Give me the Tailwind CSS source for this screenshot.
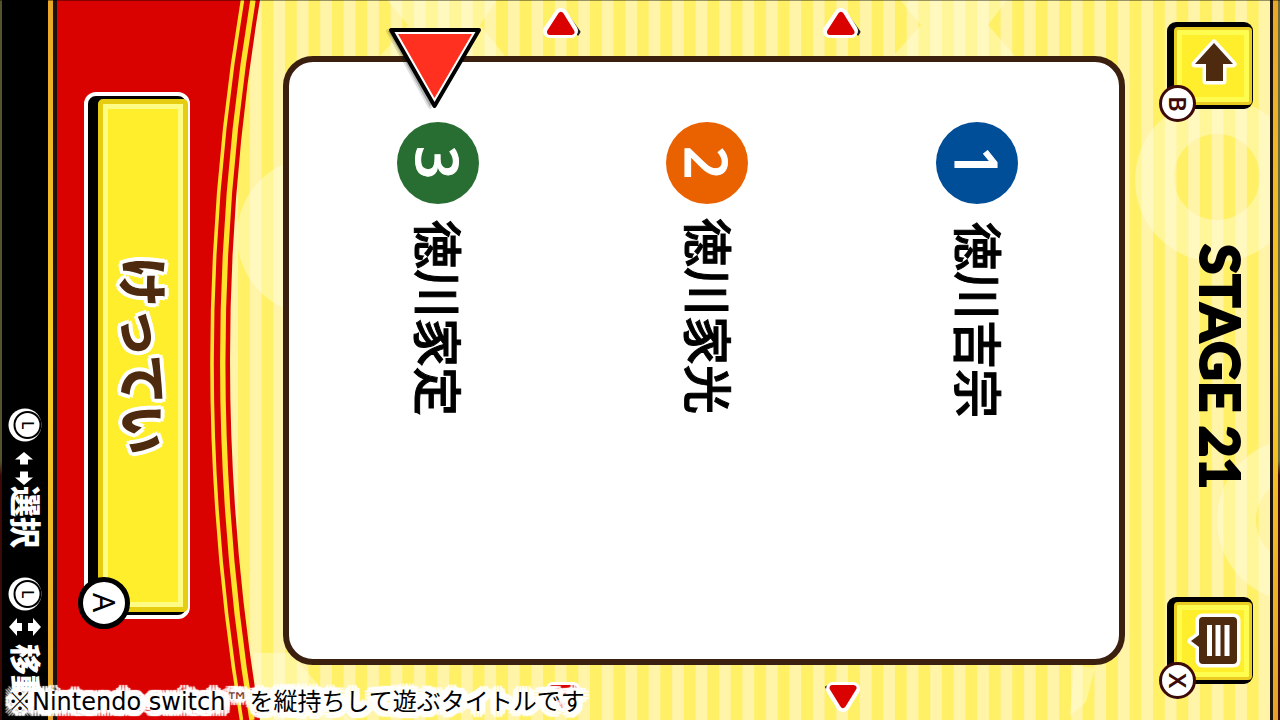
<!DOCTYPE html>
<html lang="ja">
<head>
<meta charset="utf-8">
<meta name="viewport" content="width=device-width, initial-scale=1">
<title>STAGE 21</title>
<script src="https://cdn.jsdelivr.net/npm/@tailwindcss/browser@4"></script>
</head>
<body class="relative flex h-screen min-h-[640px] overflow-hidden bg-[#fff4a6] font-['Noto_Sans','Noto_Sans_CJK_JP',sans-serif] text-black">

<!-- Striped backdrop with pale shapes -->
<svg class="absolute inset-0 size-full" viewBox="0 0 1280 720" preserveAspectRatio="none" aria-hidden="true">
  <defs>
    <pattern id="stripes" x="285" y="0" width="23.46" height="720" patternUnits="userSpaceOnUse">
      <rect width="23.46" height="720" fill="#fff4a8"/>
      <rect width="11.8" height="720" fill="#fff066"/>
    </pattern>
  </defs>
  <rect width="1280" height="720" fill="url(#stripes)"/>
  <g fill="#fffde0" fill-opacity=".42">
    <circle cx="316" cy="236" r="79"/>
    <path fill-rule="evenodd" d="M1217 98a82 82 0 1 0 .1 0zM1217 134a43 43 0 1 1-.1 0z"/>
    <path fill-rule="evenodd" d="M1299 438a82 82 0 1 0 .1 0zM1299 477a43 43 0 1 1-.1 0z"/>
    <path d="M387 0L408 25L380 56H505L480 25L497 0Z"/>
    <path d="M900 0L921 25L893 56H1015L988 25L1007 0Z"/>
    <path d="M253 653H290L350 720H258Z"/>
    <path d="M1074 665L1095 668L1086 702L1070 716Z"/>
  </g>
</svg>

<div class="relative w-[2px] shrink-0 bg-linear-to-b from-[#55532f] from-64% to-[#3c0a06] to-66%"></div>

<!-- Controller hints -->
<aside class="relative flex w-[46px] shrink-0 flex-col items-center bg-black pt-[408px] text-white">
  <div class="flex flex-col items-center">
    <span class="relative grid size-[34px] place-items-center">
      <svg class="col-start-1 row-start-1 size-[34px]" viewBox="0 0 34 34" aria-hidden="true"><circle cx="17" cy="17" r="16.5" fill="#fff"/><circle cx="19.5" cy="17" r="13" fill="#fff" stroke="#000" stroke-width="2"/></svg>
      <span class="col-start-1 row-start-1 pl-[5px] text-[16px] leading-none font-medium text-black [writing-mode:vertical-rl] [text-orientation:sideways]">L</span>
    </span>
    <svg class="mt-[9px] h-[35px] w-[20px]" viewBox="0 0 20 35" fill="#fff" role="img" aria-label="左右"><path d="M9 1L18 8.500H13V13.500H5V8.500H0ZM9 34L18 26.500H13V20.500H5V26.500H0Z"/></svg>
    <span class="text-[31px] leading-none font-black [writing-mode:vertical-rl] [text-orientation:sideways]">選択</span>
  </div>
  <div class="mt-[29px] flex flex-col items-center">
    <span class="relative grid size-[34px] place-items-center">
      <svg class="col-start-1 row-start-1 size-[34px]" viewBox="0 0 34 34" aria-hidden="true"><circle cx="17" cy="17" r="16.500" fill="#fff"/><circle cx="19.500" cy="17" r="13" fill="#fff" stroke="#000" stroke-width="2"/></svg>
      <span class="col-start-1 row-start-1 pl-[5px] text-[16px] leading-none font-medium text-black [writing-mode:vertical-rl] [text-orientation:sideways]">L</span>
    </span>
    <svg class="mt-[6px] h-[20px] w-[32px]" viewBox="0 0 32 20" fill="#fff" role="img" aria-label="上下"><path d="M0 10L8 1V6H13V14H8V19ZM32 10L24 1V6H19V14H24V19Z"/></svg>
    <span class="mt-[7px] text-[31px] leading-none font-black [writing-mode:vertical-rl] [text-orientation:sideways]">移動</span>
  </div>
</aside>
<div class="relative w-[5px] shrink-0 bg-linear-to-b from-[#e9a726] via-[#f8cb22] to-[#e6a228]"></div>
<div class="relative w-[4px] shrink-0 bg-[#1c130c]"></div>

<!-- Red decision area -->
<section class="relative w-[203px] shrink-0">
  <svg class="absolute inset-0 size-full overflow-visible" viewBox="0 0 203 720" preserveAspectRatio="none" aria-hidden="true">
    <path d="M0 0H203Q143 360 203 720H0Z" fill="#da0200"/>
    <path d="M185.500 0Q125 360 184.500 720" fill="none" stroke="#ffe22c" stroke-width="3.600"/>
    <path d="M196 0Q136 360 195 720" fill="none" stroke="#ffe22c" stroke-width="5.400"/>
  </svg>
  <div class="relative ml-[27px] flex h-full w-[106px] flex-col pt-[92px] pb-[101px]">
    <button class="relative flex flex-1 rounded-[12px] border-4 border-white bg-black pt-[3px] pr-0 pb-[3px] pl-[10px]">
      <span class="-mr-[2px] flex flex-1 items-center justify-center self-stretch rounded-[5px] border-[5px] border-[#e6cd12] bg-[#ffee2c] shadow-[inset_0_0_0_5px_#fffc86]">
        <span class="text-[50px] leading-none font-black text-[#4e2a0e] [writing-mode:vertical-rl] [text-orientation:sideways] [text-shadow:4px_0_white,-4px_0_white,0_4px_white,0_-4px_white,3px_3px_white,-3px_3px_white,3px_-3px_white,-3px_-3px_white]">けってい</span>
      </span>
      <span class="absolute -bottom-[14px] -left-[10px] grid size-[52px] place-items-center rounded-full border-[5px] border-black bg-white text-[30px] leading-none font-normal [writing-mode:vertical-rl] [text-orientation:sideways]">A</span>
    </button>
  </div>
</section>

<!-- Answer panel -->
<main class="relative ml-[23px] flex min-w-0 flex-1 flex-col">
  <div class="flex h-[56px] shrink-0 items-start justify-center gap-[244px] pt-[8px] pr-[6px]">
    <svg class="h-[31px] w-[36px] overflow-visible" viewBox="0 0 36 31" stroke-linejoin="round" aria-hidden="true"><path d="M23 6L36 24L34 27" fill="none" stroke="#222" stroke-width="3"/><path d="M18 7L28 23H7Z" fill="#fff" stroke="#fff" stroke-width="14"/><path d="M18 7L28.500 24H7Z" fill="#da0200" stroke="#da0200" stroke-width="6"/></svg>
    <svg class="h-[31px] w-[36px] overflow-visible" viewBox="0 0 36 31" stroke-linejoin="round" aria-hidden="true"><path d="M23 6L36 24L34 27" fill="none" stroke="#222" stroke-width="3"/><path d="M18 7L28 23H7Z" fill="#fff" stroke="#fff" stroke-width="14"/><path d="M18 7L28.500 24H7Z" fill="#da0200" stroke="#da0200" stroke-width="6"/></svg>
  </div>
  <div class="flex flex-1 flex-row-reverse rounded-[30px] border-[6px] border-[#3b200f] bg-white pr-[7px] pl-[14px]">
    <button class="flex flex-1 flex-col items-center pt-[60px]">
      <span class="grid size-[82px] place-items-center rounded-full bg-[#004d98] text-[58px] leading-none font-medium text-white [writing-mode:vertical-rl] [text-orientation:sideways] [-webkit-text-stroke:1px_white]">1</span>
      <span class="mt-[18px] text-[49px] leading-none font-medium [writing-mode:vertical-rl] [text-orientation:sideways] [-webkit-text-stroke:1px_black]">徳川吉宗</span>
    </button>
    <button class="flex flex-1 flex-col items-center pt-[60px]">
      <span class="grid size-[82px] place-items-center rounded-full bg-[#ea6200] text-[58px] leading-none font-medium text-white [writing-mode:vertical-rl] [text-orientation:sideways] [-webkit-text-stroke:1px_white]">2</span>
      <span class="mt-[14px] text-[49px] leading-none font-medium [writing-mode:vertical-rl] [text-orientation:sideways] [-webkit-text-stroke:1px_black]">徳川家光</span>
    </button>
    <button class="relative flex flex-1 flex-col items-center pt-[60px]" aria-current="true">
      <svg class="absolute -top-[37px] left-[82px] h-[86px] w-[98px]" viewBox="0 0 98 86" stroke-linejoin="round" aria-hidden="true">
        <path d="M3 6H80L45 82Z" fill="#000" fill-opacity=".22" stroke="#000" stroke-opacity=".12" stroke-width="4"/>
        <path d="M6 5H94L49.500 81Z" fill="#fff" stroke="#000" stroke-width="4"/>
        <path d="M13 9H87L49.500 73Z" fill="#ff3020"/>
      </svg>
      <span class="grid size-[82px] place-items-center rounded-full bg-[#286e32] text-[58px] leading-none font-medium text-white [writing-mode:vertical-rl] [text-orientation:sideways] [-webkit-text-stroke:1px_white]">3</span>
      <span class="mt-[16px] text-[49px] leading-none font-medium [writing-mode:vertical-rl] [text-orientation:sideways] [-webkit-text-stroke:1px_black]">徳川家定</span>
    </button>
  </div>
  <div class="flex h-[55px] shrink-0 items-start justify-center gap-[244px] pt-[16px] pr-[2px]">
    <svg class="h-[31px] w-[36px] overflow-visible" viewBox="0 0 36 31" stroke-linejoin="round" aria-hidden="true"><path d="M18 24L28 8H8Z" fill="#fff" stroke="#fff" stroke-width="14"/><path d="M18 24L28.500 7H7.500Z" fill="#da0200" stroke="#da0200" stroke-width="6"/></svg>
    <svg class="h-[31px] w-[36px] overflow-visible" viewBox="0 0 36 31" stroke-linejoin="round" aria-hidden="true"><path d="M1 5L13 25" stroke="#222" stroke-width="3"/><path d="M18 24L28 8H8Z" fill="#fff" stroke="#fff" stroke-width="14"/><path d="M18 24L28.500 7H7.500Z" fill="#da0200" stroke="#da0200" stroke-width="6"/></svg>
  </div>
</main>

<!-- Stage header, turned with the screen -->
<header class="relative flex w-[145px] shrink-0 flex-col items-end justify-between pt-[22px] pr-[17px] pb-[36px]">
  <button class="relative h-[87px] w-[86px] rounded-[9px] bg-black pt-[5px] pr-px pb-[4px] pl-[7px]" aria-label="もどる">
    <span class="grid size-full place-items-center rounded-[4px] border-[3px] border-[#e9cd22] bg-[#ffee2c] shadow-[inset_0_0_0_5px_#fffc50]">
      <svg class="h-[48px] w-[48px] overflow-visible" viewBox="0 0 48 48" aria-hidden="true"><path d="M25 1L44 22H34V39H17V22H6Z" fill="#4e2a0e" stroke="#fff" stroke-width="7" stroke-linejoin="round" paint-order="stroke"/></svg>
    </span>
    <span class="absolute -bottom-[13px] -left-[8px] grid size-[37px] place-items-center rounded-full border-[3px] border-[#3d0a0a] bg-white text-[24px] leading-none font-semibold text-[#3d0a0a] [writing-mode:vertical-rl] [text-orientation:sideways]">B</span>
  </button>
  <h1 class="mr-[4px] pt-[28px] font-['Lato','Noto_Sans',sans-serif] text-[55px] leading-[56px] font-black whitespace-nowrap [writing-mode:vertical-rl] [text-orientation:sideways] [-webkit-text-stroke:2px_black]">STAGE 21</h1>
  <button class="relative h-[87px] w-[86px] rounded-[9px] bg-black pt-[5px] pr-px pb-[4px] pl-[7px]" aria-label="メニュー">
    <span class="grid size-full place-items-center rounded-[4px] border-[3px] border-[#e9cd22] bg-[#ffee2c] shadow-[inset_0_0_0_5px_#fffc50]">
      <svg class="h-[48px] w-[48px] overflow-visible" viewBox="0 0 48 48" aria-hidden="true"><path d="M14 0H44Q48 0 48 4V43Q48 47 44 47H14Q10 47 10 43V30L2 24L10 18V4Q10 0 14 0Z" fill="#4e2a0e" stroke="#fff" stroke-width="7" stroke-linejoin="round" paint-order="stroke"/><path d="M18 8H23V39H18ZM26.500 8H31.500V39H26.500ZM35.500 8H40.500V39H35.500Z" fill="#fff"/></svg>
    </span>
    <span class="absolute -bottom-[15px] -left-[8px] grid size-[37px] place-items-center rounded-full border-[3px] border-[#3d0a0a] bg-white text-[24px] leading-none font-semibold text-[#3d0a0a] [writing-mode:vertical-rl] [text-orientation:sideways]">X</span>
  </button>
</header>
<div class="relative w-[3px] shrink-0 bg-[#1c130c]"></div>
<div class="relative w-[5px] shrink-0 bg-linear-to-b from-[#e9a726] via-[#f8cb22] to-[#e6a228]"></div>
<div class="relative w-[2px] shrink-0 bg-linear-to-b from-[#6b6a3c] from-64% to-[#3c0a06] to-66%"></div>

<div class="absolute inset-x-0 top-0 h-px bg-black/40"></div>

<!-- Caption over the screen -->
<p class="absolute bottom-0 left-[8px] font-['DejaVu_Sans','Noto_Sans_CJK_JP',sans-serif] text-[24px] leading-[36px] whitespace-nowrap [text-shadow:6px_0_1px_white,-6px_0_1px_white,0_6px_1px_white,0_-6px_1px_white,4px_4px_1px_white,-4px_4px_1px_white,4px_-4px_1px_white,-4px_-4px_1px_white,3px_0_2px_white,-3px_0_2px_white,0_3px_2px_white,0_-3px_2px_white,6px_3px_1px_white,-6px_3px_1px_white,6px_-3px_1px_white,-6px_-3px_1px_white,3px_6px_1px_white,-3px_6px_1px_white,3px_-6px_1px_white,-3px_-6px_1px_white]"><span class="font-['Noto_Sans_CJK_JP']">※</span>Nintendo switch<span class="text-[#7a4038]">™</span><span class="font-['Noto_Sans_CJK_JP']">を縦持ちして遊ぶタイトルです</span></p>
</body>
</html>
